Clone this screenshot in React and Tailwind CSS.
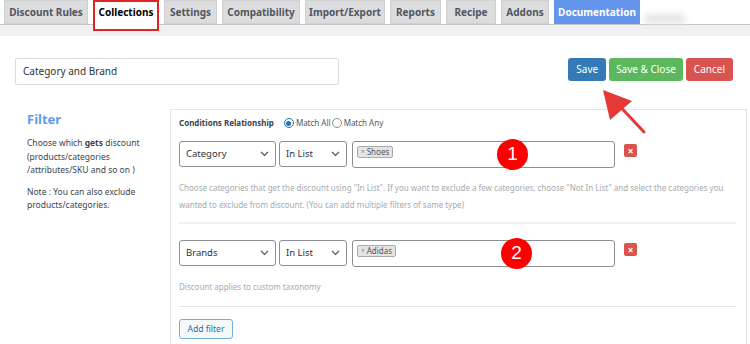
import React from "react";

const tabs = [
  { name: "Discount Rules", w: "w-[84px]" },
  { name: "Collections", w: "w-[66px]", active: true },
  { name: "Settings", w: "w-[53px]" },
  { name: "Compatibility", w: "w-[78px]" },
  { name: "Import/Export", w: "w-[80px]" },
  { name: "Reports", w: "w-[51px]" },
  { name: "Recipe", w: "w-[50px]" },
  { name: "Addons", w: "w-[48px]" },
  { name: "Documentation", w: "w-[86px]", doc: true },
];

function Chevron() {
  return (
    <svg width="9" height="6" viewBox="0 0 9 6" fill="none" stroke="#555" strokeWidth="1.2">
      <path d="M1 1l3.5 3.5L8 1" />
    </svg>
  );
}

function Select({ label, w }) {
  return (
    <div className={`${w} h-[26px] flex items-center justify-between px-[6px] border border-[#8c8f94] rounded-[3px] bg-white text-[9.5px] text-[#2c3338]`}>
      <span>{label}</span>
      <Chevron />
    </div>
  );
}

function FilterRow({ type, tag, num }) {
  return (
    <div className="flex items-start relative">
      <Select label={type} w="w-[97px]" />
      <div className="ml-[3px]">
        <Select label="In List" w="w-[68px]" />
      </div>
      <div className="ml-[5px] w-[263px] h-[27px] border border-[#8c8f94] rounded-[3px] bg-white flex items-start pt-[4px] pl-[4px]">
        <span className="flex items-center h-[12px] px-[3px] border border-[#aaa] rounded-[2px] bg-[#e4e4e4] text-[8px] leading-none text-[#555]">
          <span className="text-[6.5px] text-[#888] mr-[2px]">×</span>{tag}
        </span>
      </div>
      <div className="ml-[9px] mt-[3px] w-[13px] h-[13px] rounded-[2px] bg-[#d9534f] flex items-center justify-center text-white text-[10px] font-bold leading-none">
        ×
      </div>
      <div className={`absolute top-[-2px] ${num === "1" ? "left-[318px]" : "left-[322px]"} w-[31px] h-[31px] rounded-full bg-[#ff0000] text-white flex items-center justify-center text-[19px] font-['Liberation_Sans',sans-serif]`}>
        {num}
      </div>
    </div>
  );
}

export default function App() {
  return (
    <div className="w-[750px] h-[344px] overflow-hidden bg-white relative font-['Noto_Sans',sans-serif] text-[#3c434a]">
      {/* tabs */}
      <div className="flex items-start h-[25px] pl-[4px] gap-[5px] border-b border-[#c3c4c7]">
        {tabs.map((t) => (
          <div
            key={t.name}
            className={`${t.w} flex items-center justify-center text-[10px] font-bold ${
              t.active
                ? "relative z-10 h-[31px] pb-[7px] bg-white text-black border-2 border-[#e02424]"
                : t.doc
                ? "h-[24px] bg-[#6495ed] text-white"
                : "h-[24px] bg-[#dcdcde] text-[#50575e] border border-[#cfd0d2]"
            }`}
          >
            {t.name}
          </div>
        ))}
        <div className="w-[40px] h-[10px] bg-[#e6e6e6] blur-[3px] mt-[14px]" />
      </div>
      <div className="h-[11px] bg-[#f0f0f1]" />

      {/* title + buttons */}
      <div className="flex items-start justify-between pl-[15px] pr-[17px] pt-[22px]">
        <div className="w-[324px] h-[27px] border border-[#dcdcde] rounded-[2px] flex items-center pl-[7px] text-[10px] text-[#2c3338]">
          Category and Brand
        </div>
        <div className="flex gap-[3px]">
          <button className="h-[23px] px-[8px] rounded-[3px] bg-[#337ab7] text-white text-[10px]">Save</button>
          <button className="h-[23px] px-[7px] rounded-[3px] bg-[#5cb85c] text-white text-[10px]">Save &amp; Close</button>
          <button className="h-[23px] px-[8px] rounded-[3px] bg-[#d9534f] text-white text-[10px]">Cancel</button>
        </div>
      </div>

      {/* body */}
      <div className="flex mt-[24px]">
        <div className="w-[170px] pl-[27px] pr-[8px]">
          <h3 className="text-[13px] font-bold text-[#5b9bf0] leading-[20px]">Filter</h3>
          <p className="mt-[7px] text-[8.5px] leading-[13.5px] text-[#3c434a]">
            Choose which <b>gets</b> discount
            <br />
            (products/categories
            <br />
            /attributes/SKU and so on )
          </p>
          <p className="mt-[8px] text-[8.5px] leading-[13.5px] text-[#3c434a]">
            Note : You can also exclude
            <br />
            products/categories.
          </p>
        </div>
        <div className="w-[577px] border border-[#e5e5e5] px-[8px] pt-[6px] pb-[20px]">
          <div className="flex items-center text-[8px] h-[14px]">
            <span className="font-bold text-[#3c434a]">Conditions Relationship</span>
            <span className="ml-[10px] w-[10px] h-[10px] rounded-full border border-[#2271b1] flex items-center justify-center">
              <span className="w-[5px] h-[5px] rounded-full bg-[#2271b1]" />
            </span>
            <span className="ml-[2px] text-[#50575e]">Match All</span>
            <span className="ml-[1px] w-[10px] h-[10px] rounded-full border border-[#8c8f94]" />
            <span className="ml-[2px] text-[#50575e]">Match Any</span>
          </div>

          <div className="mt-[11px]">
            <FilterRow type="Category" tag="Shoes" num="1" />
          </div>
          <p className="mt-[11px] text-[8px] leading-[17px] text-[#a7aaad]">
            Choose categories that get the discount using "In List". If you want to exclude a few categories, choose "Not In List" and select the categories you wanted to exclude from discount. (You can add multiple filters of same type)
          </p>
          <div className="mt-[9px] border-t-2 border-[#f0f0f1] mr-[2px]" />

          <div className="mt-[16px]">
            <FilterRow type="Brands" tag="Adidas" num="2" />
          </div>
          <p className="mt-[11px] text-[8px] leading-[17px] text-[#a7aaad]">Discount applies to custom taxonomy</p>
          <div className="mt-[11px] border-t border-[#e5e5e5] mr-[2px]" />
          <button className="mt-[12px] h-[20px] w-[54px] border border-[#72aee6] rounded-[3px] bg-[#f6f7f7] text-[8.5px] text-[#2271b1]">
            Add filter
          </button>
        </div>
      </div>

      {/* annotation arrow */}
      <svg className="absolute left-[598px] top-[84px]" width="52" height="52" viewBox="0 0 52 52">
        <line x1="46" y1="48" x2="16" y2="16" stroke="#e53935" strokeWidth="3" strokeLinecap="round" />
        <polygon points="5,6 34,17 12,36" fill="#e53935" />
      </svg>
    </div>
  );
}
